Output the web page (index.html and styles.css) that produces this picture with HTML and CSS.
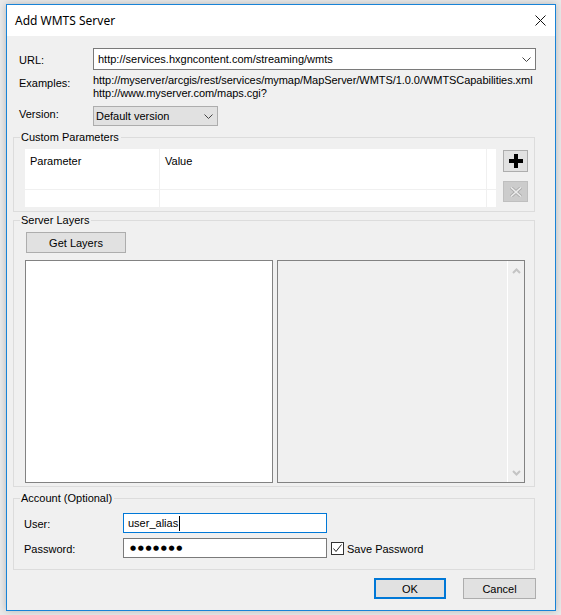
FILE: index.html
```html
<!DOCTYPE html>
<html>
<head>
<meta charset="utf-8">
<title>Add WMTS Server</title>
<link rel="stylesheet" href="styles.css">
</head>
<body>
<div class="window">
  <div class="titlebar">
    <span class="title">Add WMTS Server</span>
    <svg class="close" width="11" height="11" viewBox="0 0 11 11"><path d="M0.5 0.5L10.5 10.5M10.5 0.5L0.5 10.5" stroke="#111" stroke-width="1" fill="none"/></svg>
  </div>
  <div class="content">
    <div class="row url-row">
      <span class="label">URL:</span>
      <div class="combo edit">
        <span class="combo-text">http://services.hxgncontent.com/streaming/wmts</span>
        <svg class="chev" width="9" height="5" viewBox="0 0 9 5"><path d="M0.5 0.5L4.5 4.5L8.5 0.5" stroke="#444" stroke-width="1" fill="none"/></svg>
      </div>
    </div>
    <div class="row examples-row">
      <span class="label">Examples:</span>
      <div class="examples">
        <div>http://myserver/arcgis/rest/services/mymap/MapServer/WMTS/1.0.0/WMTSCapabilities.xml</div>
        <div>http://www.myserver.com/maps.cgi?</div>
      </div>
    </div>
    <div class="row version-row">
      <span class="label">Version:</span>
      <div class="combo list">
        <span class="combo-text">Default version</span>
        <svg class="chev" width="9" height="5" viewBox="0 0 9 5"><path d="M0.5 0.5L4.5 4.5L8.5 0.5" stroke="#444" stroke-width="1" fill="none"/></svg>
      </div>
    </div>

    <fieldset class="group params">
      <legend>Custom Parameters</legend>
      <div class="params-body">
        <div class="grid">
          <div class="grid-head">
            <div class="cell c1">Parameter</div>
            <div class="cell c2">Value</div>
            <div class="cell c3"></div>
          </div>
          <div class="grid-row">
            <div class="cell c1"></div>
            <div class="cell c2"></div>
            <div class="cell c3"></div>
          </div>
          <div class="grid-row">
            <div class="cell c1"></div>
            <div class="cell c2"></div>
            <div class="cell c3"></div>
          </div>
        </div>
        <div class="side-buttons">
          <div class="icon-btn add">
            <svg width="14" height="14" viewBox="0 0 14 14"><path d="M5 0H9V5H14V9H9V14H5V9H0V5H5Z" fill="#000"/></svg>
          </div>
          <div class="icon-btn remove">
            <svg width="12" height="10" viewBox="0 0 12 10"><path d="M1 0.5L11 9.5M11 0.5L1 9.5" stroke="#a9a9a9" stroke-width="3.2" fill="none"/><path d="M1 0.5L11 9.5M11 0.5L1 9.5" stroke="#ececec" stroke-width="1.6" fill="none"/></svg>
          </div>
        </div>
      </div>
    </fieldset>

    <fieldset class="group layers">
      <legend>Server Layers</legend>
      <div class="layers-body">
        <div class="btn get-layers">Get Layers</div>
        <div class="lists">
          <div class="list left-list"></div>
          <div class="list right-list">
            <div class="list-area"></div>
            <div class="vscroll">
              <svg width="9" height="6" viewBox="0 0 9 6"><path d="M1 5L4.5 1.5L8 5" stroke="#c4c4c4" stroke-width="2" fill="none"/></svg>
              <svg width="9" height="6" viewBox="0 0 9 6"><path d="M1 1L4.5 4.5L8 1" stroke="#c4c4c4" stroke-width="2" fill="none"/></svg>
            </div>
          </div>
        </div>
      </div>
    </fieldset>

    <fieldset class="group account">
      <legend>Account (Optional)</legend>
      <div class="account-body">
        <div class="acc-row">
          <span class="acc-label">User:</span>
          <div class="textbox focused"><span>user_alias</span><span class="caret"></span></div>
        </div>
        <div class="acc-row">
          <span class="acc-label">Password:</span>
          <div class="textbox"><span class="dots">●●●●●●●</span></div>
          <div class="checkbox">
            <svg width="11" height="11" viewBox="0 0 11 11"><path d="M1.5 5.5L4 8.5L9.5 1.5" stroke="#222" stroke-width="1" fill="none"/></svg>
          </div>
          <span class="check-label">Save Password</span>
        </div>
      </div>
    </fieldset>

    <div class="buttons">
      <div class="btn ok">OK</div>
      <div class="btn cancel">Cancel</div>
    </div>
  </div>
</div>
</body>
</html>
```

FILE: styles.css
```css
* {
  box-sizing: border-box;
}

html, body {
  margin: 0;
  padding: 0;
}

body {
  width: 561px;
  height: 615px;
  overflow: hidden;
  background: #e9e9e9;
  font-family: "Liberation Sans", Arial, sans-serif;
  font-size: 11px;
  color: #000;
}

.window {
  margin: 4px 0 0 6px;
  width: 550px;
  height: 607px;
  border: 1px solid #1883d7;
  background: #f0f0f0;
  box-shadow: 0 0 7px rgba(0, 0, 0, 0.22);
  display: flex;
  flex-direction: column;
}

.titlebar {
  height: 31px;
  flex: none;
  background: #fff;
  display: flex;
  align-items: center;
  justify-content: space-between;
  padding: 0 9px 1px 8px;
}

.title {
  font-family: "Noto Sans", "Open Sans", sans-serif;
  font-size: 12px;
  color: #000;
}

.close {
  display: block;
}

.content {
  flex: 1;
  padding-top: 12px;
}

.row {
  display: flex;
  align-items: flex-start;
  padding-left: 12px;
  line-height: 13px;
}

.label {
  width: 74px;
  flex: none;
}

.url-row .label {
  padding-top: 6px;
}

.combo {
  display: flex;
  align-items: center;
  justify-content: space-between;
}

.combo.edit {
  width: 443px;
  height: 22px;
  background: #fff;
  border: 1px solid #7a7a7a;
  padding: 0 4px 0 4px;
}

.combo.list {
  width: 125px;
  height: 20px;
  background: #e1e1e1;
  border: 1px solid #adadad;
  padding: 0 4px 0 2px;
}

.chev {
  display: block;
}

.examples-row {
  margin-top: 4px;
}

.examples {
  letter-spacing: -0.05px;
}

.examples-row .label {
  padding-top: 3px;
}

.version-row {
  margin-top: 6px;
}

.version-row .label {
  padding-top: 2px;
}

.group {
  margin: 0 20px 0 6px;
  padding: 0;
  border: 1px solid #dcdcdc;
  min-width: 0;
}

.group legend {
  margin-left: 6px;
  padding: 0 2px 0 1px;
  line-height: 13px;
}

.params {
  margin-top: 5px;
}

.params-body {
  display: flex;
  align-items: flex-start;
  padding: 5px 6px 4px 11px;
}

.grid {
  width: 471px;
  height: 58px;
  background: #fff;
  overflow: hidden;
}

.grid-head,
.grid-row {
  display: flex;
}

.grid-head {
  height: 23px;
}

.grid-row {
  height: 18px;
  border-bottom: 1px solid #f0f0f0;
}

.cell {
  height: 100%;
}

.grid-head .cell {
  line-height: 23px;
  padding: 1px 0 0 5px;
}

.c1 {
  width: 135px;
  border-right: 1px solid #f0f0f0;
}

.c2 {
  width: 327px;
  border-right: 1px solid #f0f0f0;
}

.c3 {
  flex: 1;
}

.side-buttons {
  margin-left: 7px;
  display: flex;
  flex-direction: column;
}

.icon-btn {
  width: 25px;
  display: flex;
  align-items: center;
  justify-content: center;
}

.icon-btn.add {
  height: 22px;
  margin-top: 1px;
  background: #e1e1e1;
  border: 1px solid #adadad;
}

.icon-btn.remove {
  height: 21px;
  margin-top: 9px;
  background: #cccccc;
  border: 1px solid #bfbfbf;
}

.layers {
  margin-top: 2px;
}

.layers-body {
  padding: 5px 9px 3px 11px;
}

.btn {
  height: 21px;
  background: #e1e1e1;
  border: 1px solid #adadad;
  display: flex;
  align-items: center;
  justify-content: center;
}

.get-layers {
  width: 100px;
  margin-left: 1px;
}

.lists {
  display: flex;
  gap: 4px;
  margin-top: 7px;
}

.list {
  width: 248px;
  height: 223px;
  border: 1px solid #828282;
}

.left-list {
  background: #fff;
}

.right-list {
  background: #f0f0f0;
  display: flex;
}

.list-area {
  flex: 1;
}

.vscroll {
  width: 17px;
  border-left: 1px solid #fff;
  display: flex;
  flex-direction: column;
  justify-content: space-between;
  align-items: center;
  padding: 7px 0 6px 0;
}

.vscroll svg {
  display: block;
}

.account {
  margin-top: 5px;
}

.account-body {
  padding: 8px 0 11px 10px;
}

.acc-row {
  display: flex;
  align-items: center;
}

.acc-row + .acc-row {
  margin-top: 5px;
}

.acc-label {
  width: 99px;
  flex: none;
  padding-top: 2px;
}

.textbox {
  width: 204px;
  height: 20px;
  background: #fff;
  border: 1px solid #7a7a7a;
  display: flex;
  align-items: center;
  padding-left: 4px;
}

.textbox.focused {
  border-color: #0078d7;
}

.caret {
  width: 1px;
  height: 15px;
  background: #000;
  margin-left: 1px;
}

.dots {
  font-family: "DejaVu Sans", sans-serif;
  font-size: 7px;
  letter-spacing: 1.6px;
  padding-left: 2px;
}

.checkbox {
  width: 13px;
  height: 13px;
  margin-left: 4px;
  border: 1px solid #333;
  background: #fff;
  display: flex;
  align-items: center;
  justify-content: center;
}

.checkbox svg {
  display: block;
}

.check-label {
  margin-left: 3px;
  padding-top: 1px;
}

.buttons {
  display: flex;
  justify-content: flex-end;
  gap: 17px;
  margin: 8px 19px 0 0;
}

.btn.ok {
  width: 72px;
  border: 2px solid #0078d7;
}

.btn.cancel {
  width: 73px;
}
```
